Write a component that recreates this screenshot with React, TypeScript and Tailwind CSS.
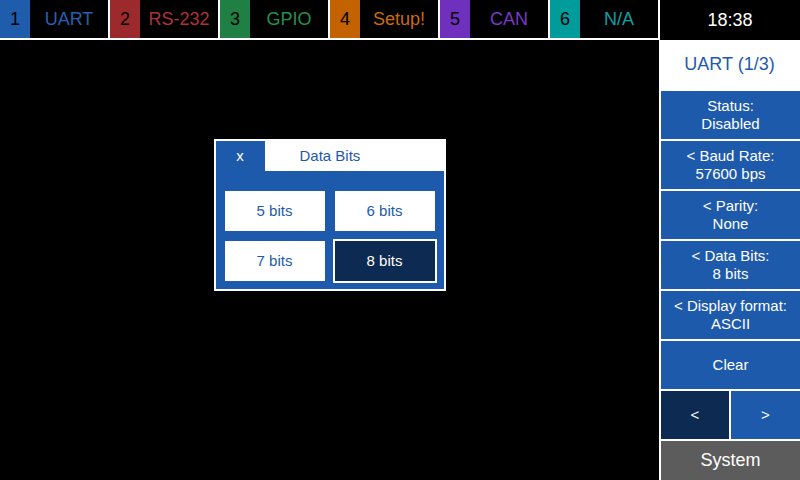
import React from 'react'

const tabs = [
  { n: '1', label: 'UART', box: 'bg-[#1f5cab]', text: 'text-[#2460b4]' },
  { n: '2', label: 'RS-232', box: 'bg-[#9c2a2c]', text: 'text-[#b03234]' },
  { n: '3', label: 'GPIO', box: 'bg-[#1f7f44]', text: 'text-[#24904c]' },
  { n: '4', label: 'Setup!', box: 'bg-[#c46200]', text: 'text-[#cc6a08]' },
  { n: '5', label: 'CAN', box: 'bg-[#6f30bd]', text: 'text-[#7a38c8]' },
  { n: '6', label: 'N/A', box: 'bg-[#009c9c]', text: 'text-[#0aa2a2]' },
]

const settings = [
  ['Status:', 'Disabled'],
  ['< Baud Rate:', '57600 bps'],
  ['< Parity:', 'None'],
  ['< Data Bits:', '8 bits'],
  ['< Display format:', 'ASCII'],
]

export default function App() {
  return (
    <div
      className="flex h-[480px] w-[800px] flex-col overflow-hidden bg-black"
      style={{ fontFamily: '"Liberation Sans", Arial, sans-serif' }}
    >
      <div className="flex h-[40px] shrink-0">
        {tabs.map((t) => (
          <div
            key={t.n}
            className="box-border flex h-[40px] w-[110px] border-r-2 border-b-2 border-white"
          >
            <div className={`flex w-[30px] items-center justify-center text-[18px] text-black ${t.box}`}>
              {t.n}
            </div>
            <div className={`flex flex-1 items-center justify-center text-[18px] ${t.text}`}>
              {t.label}
            </div>
          </div>
        ))}
        <div className="flex flex-1 items-center justify-center text-[18px] text-white">18:38</div>
      </div>

      <div className="flex flex-1">
        <div className="flex flex-1 justify-center pt-[99px]">
          <div className="box-border h-[152px] w-[232px] border-2 border-white bg-[#1e5aab]">
            <div className="flex h-[30px]">
              <div className="flex w-[49px] items-center justify-center text-[15px] text-white">x</div>
              <div className="flex flex-1 items-center bg-white pl-[35px] text-[15px] text-[#1e5aab]">
                Data Bits
              </div>
            </div>
            <div className="grid grid-cols-2 gap-x-[10px] gap-y-[10px] px-[9px] pt-[20px]">
              {['5 bits', '6 bits', '7 bits'].map((b) => (
                <div
                  key={b}
                  className="flex h-[40px] items-center justify-center bg-white text-[15px] text-[#1e5aab]"
                >
                  {b}
                </div>
              ))}
              <div className="-m-[2px] flex h-[44px] items-center justify-center border-2 border-white bg-[#0d2a52] text-[15px] text-white">
                8 bits
              </div>
            </div>
          </div>
        </div>

        <div className="flex w-[141px] flex-col gap-[2px] bg-white pl-[2px]">
          <div className="-ml-[2px] flex h-[49px] items-center justify-center text-[18px] text-[#1e5aab]">
            UART (1/3)
          </div>
          {settings.map(([a, b]) => (
            <div
              key={a}
              className="flex h-[48px] flex-col items-center justify-center bg-[#1e5aab] text-[15px] leading-[18px] text-white"
            >
              <span>{a}</span>
              <span>{b}</span>
            </div>
          ))}
          <div className="flex h-[48px] items-center justify-center bg-[#1e5aab] text-[15px] text-white">
            Clear
          </div>
          <div className="flex h-[48px] gap-[2px]">
            <div className="flex w-[68px] items-center justify-center bg-[#0d2a52] text-[15px] text-white">
              &lt;
            </div>
            <div className="flex flex-1 items-center justify-center bg-[#1e5aab] text-[15px] text-white">
              &gt;
            </div>
          </div>
          <div className="flex flex-1 items-center justify-center bg-[#5c5c5c] text-[18px] text-white">
            System
          </div>
        </div>
      </div>
    </div>
  )
}
